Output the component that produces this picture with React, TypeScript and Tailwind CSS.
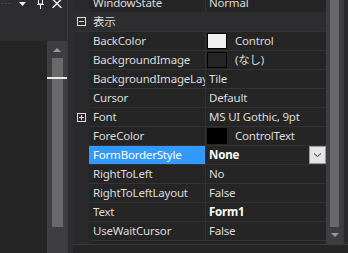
import React from "react";

type Row = {
  name: string;
  value: string;
  swatch?: string;
  bold?: boolean;
  expand?: boolean;
  selected?: boolean;
};

const rows: Row[] = [
  { name: "BackColor", value: "Control", swatch: "#f0f0f0" },
  { name: "BackgroundImage", value: "(なし)", swatch: "#252526" },
  { name: "BackgroundImageLayout", value: "Tile" },
  { name: "Cursor", value: "Default" },
  { name: "Font", value: "MS UI Gothic, 9pt", expand: true },
  { name: "ForeColor", value: "ControlText", swatch: "#000000" },
  { name: "FormBorderStyle", value: "None", bold: true, selected: true },
  { name: "RightToLeft", value: "No" },
  { name: "RightToLeftLayout", value: "False" },
  { name: "Text", value: "Form1", bold: true },
  { name: "UseWaitCursor", value: "False" },
];

function Box({ minus }: { minus?: boolean }) {
  return (
    <svg width="9" height="9" viewBox="0 0 9 9" className="block">
      <rect x="0.5" y="0.5" width="8" height="8" fill="none" stroke="#e0e0e0" />
      <line x1="2" y1="4.5" x2="7" y2="4.5" stroke="#e0e0e0" />
      {!minus && <line x1="4.5" y1="2" x2="4.5" y2="7" stroke="#e0e0e0" />}
    </svg>
  );
}

function PropRow({ r }: { r: Row }) {
  return (
    <div className="flex h-[19px] shrink-0">
      <div className="w-[16px] shrink-0 bg-[#2a2a2d] flex items-center justify-center">
        {r.expand && <Box />}
      </div>
      <div
        className={
          "w-[116px] shrink-0 border-b border-[#333337] flex items-center pl-[4px] overflow-hidden whitespace-nowrap " +
          (r.selected ? "bg-[#3399ff] text-white" : "text-[#dcdcdc]")
        }
      >
        {r.name}
      </div>
      <div className="w-px shrink-0 bg-[#333337]" />
      <div className="flex-1 border-b border-[#333337] flex items-center overflow-hidden whitespace-nowrap text-[#dcdcdc]">
        {r.swatch ? (
          <>
            <div
              className="ml-[1px] w-[20px] h-[16px] border border-black shrink-0"
              style={{ backgroundColor: r.swatch }}
            />
            <span className="ml-[8px]">{r.value}</span>
          </>
        ) : (
          <span className={"ml-[3px] " + (r.bold ? "font-bold text-white" : "")}>{r.value}</span>
        )}
        {r.selected && (
          <div className="ml-auto w-[17px] h-[18px] bg-[#e4e4e4] border border-[#999999] flex items-center justify-center">
            <svg width="9" height="6" viewBox="0 0 9 6">
              <path d="M1 1.5 L4.5 4.5 L8 1.5" fill="none" stroke="#333" strokeWidth="1" />
            </svg>
          </div>
        )}
      </div>
    </div>
  );
}

export default function App() {
  return (
    <div
      className="w-[348px] h-[253px] flex bg-[#252526] overflow-hidden text-[11.5px] tracking-[-0.2px] leading-none"
      style={{ fontFamily: '"Noto Sans", "Noto Sans CJK JP", sans-serif' }}
    >
      {/* left tool window */}
      <div className="w-[67px] shrink-0 flex flex-col">
        <div className="h-[41px] shrink-0 bg-[#2d2d30] flex items-start">
          <div className="ml-[1px] mt-[3px] w-[10px] h-[2px] border-t border-dotted border-[#4a4a4f]" />
          <svg width="7" height="4" viewBox="0 0 7 4" className="ml-[8px] mt-[2px]">
            <path d="M0 0 H7 L3.5 4 Z" fill="#f0f0f0" />
          </svg>
          <svg width="7" height="10" viewBox="0 0 7 10" className="ml-[11px] -mt-[1px]">
            <rect x="1.5" y="-1" width="4" height="6" fill="none" stroke="#f0f0f0" />
            <line x1="0" y1="5.5" x2="7" y2="5.5" stroke="#f0f0f0" />
            <line x1="3.5" y1="6" x2="3.5" y2="10" stroke="#f0f0f0" />
          </svg>
          <svg width="10" height="9" viewBox="0 0 10 9" className="ml-[8px] -mt-[1px]">
            <path d="M0.5 0 L9.5 9 M9.5 0 L0.5 9" stroke="#f0f0f0" strokeWidth="1.4" />
          </svg>
        </div>
        <div className="flex-1 flex">
          <div className="flex-1 bg-[#252526]" />
          <div className="w-[20px] bg-[#3e3e42] relative flex flex-col items-center">
            <svg width="8" height="4" viewBox="0 0 8 4" className="mt-[7px]">
              <path d="M0 4 L4 0 L8 4 Z" fill="#9a9a9a" />
            </svg>
            <div className="mt-[6px] w-[11px] h-[169px] bg-[#686868]" />
            <div className="absolute left-0 right-0 top-[36px] h-[2px] bg-[#e8e8e8]" />
          </div>
        </div>
      </div>

      {/* splitter */}
      <div className="w-[6px] shrink-0 bg-[#2d2d30] border-l border-[#3a3a3e]" />

      {/* property grid */}
      <div className="flex-1 flex flex-col min-w-0">
        <div className="flex h-[244px] shrink-0 overflow-hidden">
          <div className="w-[253px] shrink-0 flex flex-col">
            <div className="flex h-[19px] shrink-0 -mt-[7px]">
              <div className="w-[16px] shrink-0 bg-[#2a2a2d]" />
              <div className="w-[116px] shrink-0 flex items-center pl-[4px] text-[#dcdcdc]">WindowState</div>
              <div className="w-px shrink-0 bg-[#333337]" />
              <div className="flex-1 flex items-center pl-[3px] text-[#dcdcdc]">Normal</div>
            </div>
            <div className="flex h-[20px] shrink-0 bg-[#2d2d30] items-center border-b border-[#333337]">
              <div className="w-[16px] shrink-0 flex items-center justify-center">
                <Box minus />
              </div>
              <div className="pl-[4px] text-[#dcdcdc]">表示</div>
            </div>
            {rows.map((r) => (
              <PropRow key={r.name} r={r} />
            ))}
            <div className="flex-1 flex">
              <div className="w-[16px] shrink-0 bg-[#2a2a2d]" />
              <div className="flex-1 bg-[#252526]" />
            </div>
          </div>
          <div className="w-[17px] shrink-0 bg-[#3e3e42] flex flex-col items-center">
            <div className="w-[9px] h-[227px] bg-[#686868]" />
            <svg width="8" height="4" viewBox="0 0 8 4" className="mt-[6px]">
              <path d="M0 0 H8 L4 4 Z" fill="#9a9a9a" />
            </svg>
          </div>
          <div className="flex-1 border-l border-[#3a3a3e] bg-[#2a2a2d]" />
        </div>
        <div className="flex-1 border-t border-[#3a3a3e] bg-[#252526]" />
      </div>
    </div>
  );
}
